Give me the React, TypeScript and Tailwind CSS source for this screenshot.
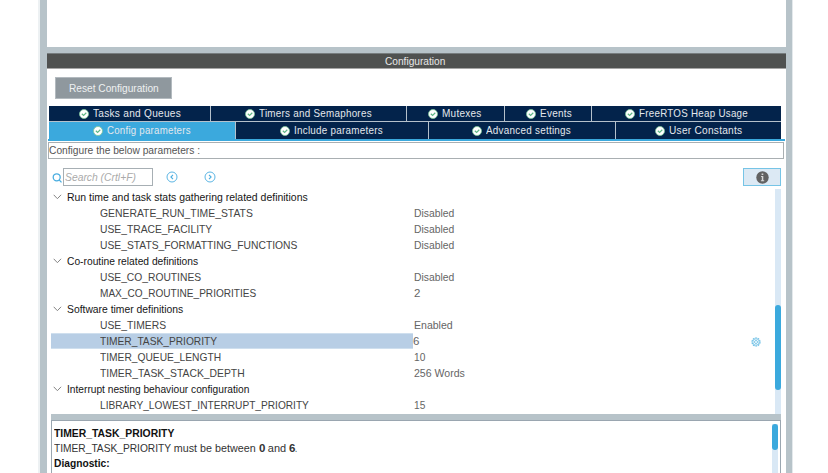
import { useLayoutEffect, useRef, type ReactNode } from "react";

/** A single line of text condensed or widened to an exact advance width. */
function Line({ w, className = "", children }: { w: number; className?: string; children: ReactNode }) {
  const ref = useRef<HTMLSpanElement>(null);
  useLayoutEffect(() => {
    const el = ref.current;
    if (el) el.style.transform = `scaleX(${w / el.offsetWidth})`;
  }, [w]);
  return (
    <span className="flex shrink-0 items-start" style={{ width: w }}>
      <span ref={ref} className={`block shrink-0 origin-left whitespace-pre ${className}`}>
        {children}
      </span>
    </span>
  );
}

function Check() {
  return (
    <svg className="size-[10px] shrink-0" viewBox="0 0 10 10">
      <circle cx="5" cy="5" r="4.5" fill="#fff" stroke="#7cc79b" strokeWidth="0.8" />
      <path d="M2.8 4.7 4.6 6.4 7.3 3.8" fill="none" stroke="#5fb886" strokeWidth="1.2" />
    </svg>
  );
}

type TabItem = { label: string; textWidth: number; box: string };

const upperTabs: TabItem[] = [
  { label: "Tasks and Queues", textWidth: 88, box: "w-[162px] pl-[30px]" },
  { label: "Timers and Semaphores", textWidth: 113, box: "w-[196px] pl-[34px]" },
  { label: "Mutexes", textWidth: 40, box: "w-[98px] pl-[21px]" },
  { label: "Events", textWidth: 32, box: "w-[87px] pl-[21px]" },
  { label: "FreeRTOS Heap Usage", textWidth: 109, box: "w-[189px] pl-[33px]" },
];

const lowerTabs: TabItem[] = [
  { label: "Config parameters", textWidth: 84, box: "w-[187px] pl-[44px] bg-[#3ba9dd]" },
  { label: "Include parameters", textWidth: 89, box: "w-[193px] pl-[44px] bg-[#03234b]" },
  { label: "Advanced settings", textWidth: 85, box: "w-[187px] pl-[43px] bg-[#03234b]" },
  { label: "User Constants", textWidth: 73, box: "w-[165px] pl-[39px] bg-[#03234b]" },
];

function Tab({ tab, last, className }: { tab: TabItem; last: boolean; className: string }) {
  return (
    <div className={`flex shrink-0 items-center gap-[4.4px] ${last ? "" : "border-r border-[#b5c1cc]"} ${tab.box} ${className}`}>
      <Check />
      <Line w={tab.textWidth} className="text-[11.5px] leading-[15px] tracking-[0.3px] text-[#e3e8ed]">{tab.label}</Line>
    </div>
  );
}

type RowItem = { group?: boolean; name: string; nameWidth: number; value?: string; valueWidth?: number; selected?: boolean };

const rows: RowItem[] = [
  { group: true, name: "Run time and task stats gathering related definitions", nameWidth: 241 },
  { name: "GENERATE_RUN_TIME_STATS", nameWidth: 152.5, value: "Disabled", valueWidth: 40.5 },
  { name: "USE_TRACE_FACILITY", nameWidth: 112, value: "Disabled", valueWidth: 40.5 },
  { name: "USE_STATS_FORMATTING_FUNCTIONS", nameWidth: 197, value: "Disabled", valueWidth: 40.5 },
  { group: true, name: "Co-routine related definitions", nameWidth: 131 },
  { name: "USE_CO_ROUTINES", nameWidth: 101, value: "Disabled", valueWidth: 40.5 },
  { name: "MAX_CO_ROUTINE_PRIORITIES", nameWidth: 156, value: "2", valueWidth: 6 },
  { group: true, name: "Software timer definitions", nameWidth: 116 },
  { name: "USE_TIMERS", nameWidth: 66.5, value: "Enabled", valueWidth: 38.5 },
  { name: "TIMER_TASK_PRIORITY", nameWidth: 117, value: "6", valueWidth: 6, selected: true },
  { name: "TIMER_QUEUE_LENGTH", nameWidth: 121, value: "10", valueWidth: 11.5 },
  { name: "TIMER_TASK_STACK_DEPTH", nameWidth: 145, value: "256 Words", valueWidth: 50.5 },
  { group: true, name: "Interrupt nesting behaviour configuration", nameWidth: 182.5 },
  { name: "LIBRARY_LOWEST_INTERRUPT_PRIORITY", nameWidth: 209, value: "15", valueWidth: 11.5 },
];

function Row({ row }: { row: RowItem }) {
  if (row.group) {
    return (
      <div className="flex h-4 items-center pl-[2px]">
        <svg className="mr-[5px] h-[6px] w-[9px] shrink-0" viewBox="0 0 9 6">
          <path d="M.7.8 4.4 4.7 8.1.8" fill="none" stroke="#858585" strokeWidth="1" />
        </svg>
        <Line w={row.nameWidth} className="text-[11.5px] leading-4 text-[#161616]">{row.name}</Line>
      </div>
    );
  }
  return (
    <div className="flex h-4 items-center">
      <div className={`flex h-4 w-[362px] items-center pl-[49.3px] ${row.selected ? "border-y border-[#cfdfee] bg-[#b8cee5]" : ""}`}>
        <Line w={row.nameWidth} className="text-[11.5px] leading-4 text-[#444]">{row.name}</Line>
      </div>
      <div className={row.selected ? "w-[338px]" : "w-[338px] pl-[1px]"}>
        <Line w={row.valueWidth ?? 0} className="text-[11.5px] leading-4 text-[#656565]">{row.value}</Line>
      </div>
      {row.selected && (
        <svg className="mt-[2px] size-[10px]" viewBox="0 0 10 10" fill="none" stroke="#6dbfe5">
          <circle cx="5" cy="5" r="4" strokeWidth="1.2" strokeDasharray="1.8 .7" />
          <circle cx="5" cy="5" r="3.1" strokeWidth=".7" />
          <circle cx="5" cy="5" r="1.5" strokeWidth=".9" />
        </svg>
      )}
    </div>
  );
}

function NavCircle({ d }: { d: string }) {
  return (
    <svg className="size-3 shrink-0" viewBox="0 0 12 12" fill="none" stroke="#49ade0">
      <circle cx="6" cy="6" r="5" strokeWidth=".9" />
      <path d={d} strokeWidth="1.1" />
    </svg>
  );
}

export default function App() {
  return (
    <div className="flex h-[473px] w-[828px] overflow-hidden bg-white pl-[38px] font-['Liberation_Sans',Arial,sans-serif]">
      <div className="flex h-full w-[755px] shrink-0 border-r border-r-[#e4e9ec] border-l-2 border-l-[#edf1f3]">
        <div className="flex w-full flex-col border-r-[6px] border-l-[7px] border-[#b7c3c9]">
          <div className="h-[47px] shrink-0" />
          <div className="h-[6px] shrink-0 bg-[#b7c3c9]" />
          <header className="flex h-4 shrink-0 justify-center border-t border-b border-t-[#777d7f] border-b-[#a5a5a5] bg-[#4f5150] pr-[3px]">
            <Line w={60} className="text-[11.5px] leading-[14px] text-[#e7e7e7]">Configuration</Line>
          </header>
          <div className="h-[37px] shrink-0 pt-[8px] pl-[8px]">
            <button className="flex h-[22px] w-[117px] items-center justify-center border border-[#b3babf] bg-[#8f989e]">
              <Line w={90} className="text-[11.5px] leading-[18px] text-[#eef0f1]">Reset Configuration</Line>
            </button>
          </div>
          <nav className="shrink-0 pl-[1px]">
            <div className="flex pl-[1px]">
              {upperTabs.map((t, i) => <Tab key={t.label} tab={t} last={i === 4} className="h-[15px] bg-[#03234b]" />)}
            </div>
            <div className="ml-[1px] flex w-[732px] border-t border-[#b5c1cc]">
              {lowerTabs.map((t, i) => <Tab key={t.label} tab={t} last={i === 3} className="h-[17px]" />)}
            </div>
            <div className="h-[2px] w-[737px] bg-[#3ba9dd]" />
          </nav>
          <div className="mt-[1px] ml-[1px] flex h-[17px] w-[736px] shrink-0 items-center border border-[#a9afb2]">
            <Line w={151} className="text-[11.5px] leading-[15px] text-[#555]">Configure the below parameters :</Line>
          </div>
          <div className="flex h-[30px] shrink-0 items-start pt-[9px] pl-[5px]">
            <svg className="mt-[5px] size-[10px] shrink-0" viewBox="0 0 10 10" fill="none" stroke="#49ade0" strokeWidth="1.3">
              <circle cx="4.7" cy="4.3" r="3.5" />
              <path d="m7.1 6.9 2.4 2.5" />
            </svg>
            <div className="ml-[1px] flex h-[18px] w-[90px] items-center border border-[#a7afb4] pl-[1px]">
              <Line w={71} className="text-[11.5px] leading-4 text-[#aaa] italic">Search (Crtl+F)</Line>
            </div>
            <div className="mt-[3px] ml-[12.5px] flex gap-[26.5px]">
              <NavCircle d="M7 3.8 4.9 6 7 8.2" />
              <NavCircle d="M5 3.8 7.1 6 5 8.2" />
            </div>
            <button className="ml-[527px] flex h-[18px] w-[38px] items-center justify-center border border-[#76c4e6] bg-[#dce9f4]">
              <svg className="size-[13px]" viewBox="0 0 13 13">
                <circle cx="6.5" cy="6.5" r="6.2" fill="#626262" />
                <path d="M5 5h2.3v4.3h.9v.9H4.9v-.9h.9V5.9H5zM5.6 2.5h1.7v1.6H5.6z" fill="#d6d6d6" />
              </svg>
            </button>
          </div>
          <div className="flex h-[225px] shrink-0 pl-[4px]">
            <div className="w-[724px] shrink-0">
              {rows.map((r) => <Row key={r.name} row={r} />)}
            </div>
            <div className="w-[6px] shrink-0 bg-[#d9e8f5] pt-[116px]">
              <div className="h-[85px] rounded-full bg-[#3ba9dd]" />
            </div>
          </div>
          <div className="ml-[4px] h-[6px] w-[730px] shrink-0 bg-[#b7c3c9]" />
          <section className="ml-[4px] flex h-[53px] w-[730px] shrink-0 justify-between border-t border-r border-l border-[#9aa6b0] pt-[3px] pr-[2px] pl-[2px] text-[11.5px] leading-[15px] text-[#111]">
            <div className="pt-[2px]">
              <Line w={120} className="font-bold">TIMER_TASK_PRIORITY</Line>
              <div className="flex text-[#333]">
                <Line w={117}>TIMER_TASK_PRIORITY</Line>
                <Line w={85} className="pl-[3px]">must be between</Line>
                <Line w={9} className="pl-[3px] font-bold">0</Line>
                <Line w={21} className="pl-[3px]">and</Line>
                <Line w={9} className="pl-[3px] font-bold">6</Line>
                <Line w={2}>.</Line>
              </div>
              <Line w={56} className="font-bold">Diagnostic:</Line>
            </div>
            <div className="h-[49px] w-[6px] bg-[#d9e8f5]">
              <div className="h-[26px] rounded-full bg-[#3ba9dd]" />
            </div>
          </section>
        </div>
      </div>
    </div>
  );
}
